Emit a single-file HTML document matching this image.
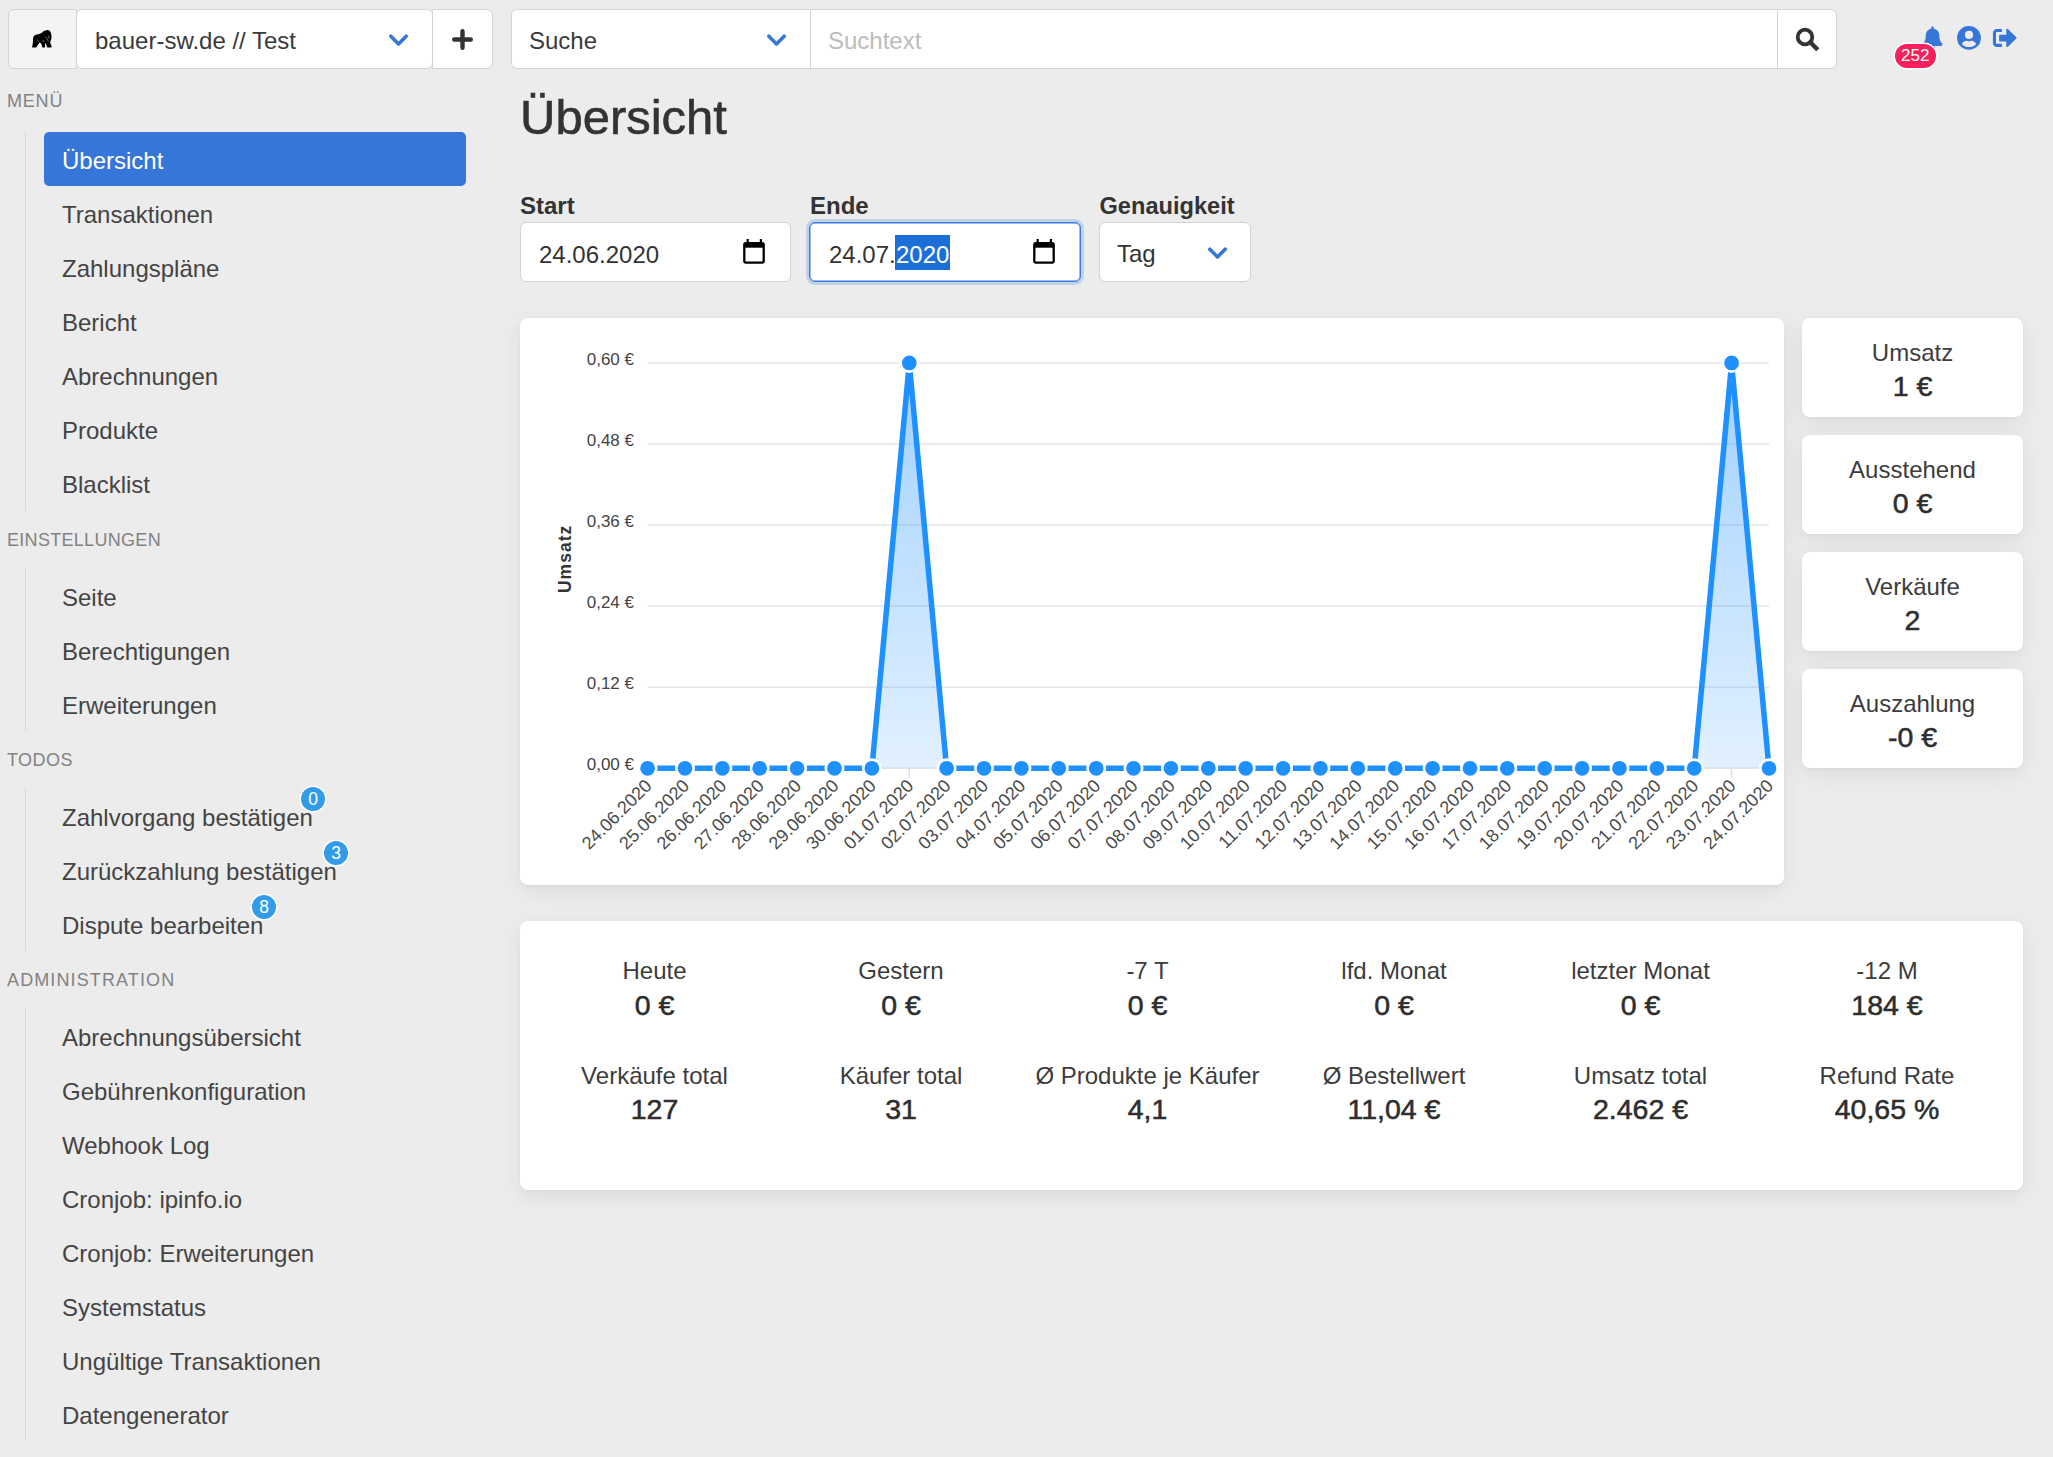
<!DOCTYPE html>
<html lang="de">
<head>
<meta charset="utf-8">
<title>Übersicht</title>
<style>
*{box-sizing:border-box;margin:0;padding:0}
html,body{width:2053px;height:1457px;overflow:hidden}
body{background:#ececec;font-family:"Liberation Sans",sans-serif;color:#333;position:relative}
.abs{position:absolute}
.box{position:absolute;background:#fff;border:1px solid #d3d3d3}
.t{position:absolute;white-space:nowrap;line-height:1}
/* sidebar */
.sec{position:absolute;left:7px;font-size:18px;letter-spacing:0.3px;color:#828282;white-space:nowrap;line-height:1}
.vl{position:absolute;left:25px;width:1px;background:#d6d6d6}
.it{position:absolute;left:44px;width:422px;height:54px;padding-left:18px;font-size:24px;color:#444;white-space:nowrap;line-height:1}
.it span{position:absolute;left:18px;top:0}
.it.act{background:#3676d8;border-radius:5px;color:#fff}
.bdg{position:absolute;width:24px;height:24px;margin:1px 0 0 1px;border-radius:50%;background:#339cea;box-shadow:0 0 0 1.6px #fff;color:#fff;font-size:17.5px;line-height:25px;text-align:center}
.card{position:absolute;background:#fff;border-radius:8px;box-shadow:0 6px 22px rgba(0,0,0,0.075),0 1px 3px rgba(0,0,0,0.04)}
.lab{position:absolute;font-size:24px;color:#3c3c3c;white-space:nowrap;line-height:1;text-align:center}
.val{position:absolute;font-size:28.5px;font-weight:normal;-webkit-text-stroke:0.55px #2e2e2e;color:#2e2e2e;white-space:nowrap;line-height:1;text-align:center}
</style>
</head>
<body>
<!-- top-left group -->
<div class="box" style="left:8px;top:9px;width:69px;height:60px;background:#f4f4f4;border-radius:6px 0 0 6px"></div>
<svg class="abs" style="left:28px;top:26px" width="28" height="26" viewBox="0 0 28 26"><path d="M19.6 4.1C21.4 4.1 22.6 5.6 23 7.6 23.3 9 23.6 10.2 23.5 11.6 23.4 13.4 22.6 15 22.2 16.4L23.6 20.2C23.9 21 23.5 21.6 22.8 21.6H19.3C18.6 19.8 17.9 18 17.2 16.4 16.9 18 17 19.8 17.1 21.6H14.4C14 20 13.6 18.5 13 17.2L11.5 16.6C10.4 18.2 9.2 19.8 8.3 21.6H4.1C4.2 19.6 4.8 17.8 5 15.8 4.8 14.2 4.9 12.4 5.5 10.7 6.2 9.2 7.4 8.6 9 8.4 11 8.1 12.6 7.6 14.3 6.4 16 5 17.6 4.1 19.6 4.1Z" fill="#000"/><path d="M20.7 9.8c.4.8.4 1.6.1 2.5M17.9 11.3l2.6 4M9.3 13.8l1.3 1.6M15.2 14.2l.5 1.5" stroke="#8a8a8a" stroke-width="0.8" fill="none" stroke-linecap="round"/></svg>
<div class="box" style="left:76px;top:9px;width:357px;height:60px;border-radius:6px"></div>
<div class="t" style="left:95px;top:29px;font-size:24px;color:#3a3a3a">bauer-sw.de // Test</div>
<svg class="abs" style="left:387px;top:32px" width="23" height="16" viewBox="0 0 23 16"><path d="M3.8 4.2l7.7 7.7 7.7-7.7" stroke="#3676d8" stroke-width="3.6" fill="none" stroke-linecap="round" stroke-linejoin="round"/></svg>
<div class="box" style="left:432px;top:9px;width:61px;height:60px;border-radius:0 6px 6px 0"></div>
<svg class="abs" style="left:450px;top:26.5px" width="25" height="25" viewBox="0 0 25 25"><path d="M12.5 4.2v16.6M4.2 12.5h16.6" stroke="#333" stroke-width="4.4" stroke-linecap="round"/></svg>

<!-- search group -->
<div class="box" style="left:511px;top:9px;width:1326px;height:60px;border-radius:6px"></div>
<div class="abs" style="left:810px;top:10px;width:1px;height:58px;background:#d3d3d3"></div>
<div class="abs" style="left:1777px;top:10px;width:1px;height:58px;background:#d3d3d3"></div>
<div class="t" style="left:529px;top:29px;font-size:24px;color:#3a3a3a">Suche</div>
<svg class="abs" style="left:765px;top:32px" width="23" height="16" viewBox="0 0 23 16"><path d="M3.8 4.2l7.7 7.7 7.7-7.7" stroke="#3676d8" stroke-width="3.6" fill="none" stroke-linecap="round" stroke-linejoin="round"/></svg>
<div class="t" style="left:828px;top:29px;font-size:24px;color:#bcbcbc">Suchtext</div>
<svg class="abs" style="left:1793px;top:25px" width="28" height="28" viewBox="0 0 28 28"><circle cx="12" cy="12" r="7.3" stroke="#333" stroke-width="3.8" fill="none"/><path d="M17.3 17.3l5.9 5.9" stroke="#333" stroke-width="4.4" stroke-linecap="square"/></svg>

<!-- header icons -->
<svg class="abs" style="left:1920.2px;top:24.6px" width="25" height="25" viewBox="0 0 24 24" preserveAspectRatio="none"><path d="M12 1.5c.8 0 1.3.5 1.3 1.3v.9c3.1.6 5.3 3.3 5.3 6.5v1.3c0 2.1.8 4.1 2.2 5.7l.4.4c.4.5.5 1.1.3 1.6-.3.5-.8.9-1.4.9H4c-.6 0-1.1-.4-1.4-.9-.2-.5-.1-1.1.3-1.6l.4-.4c1.4-1.6 2.2-3.6 2.2-5.7v-1.3c0-3.2 2.2-5.9 5.3-6.5v-.9c0-.8.5-1.3 1.2-1.3zM9.5 20.8h5c0 1.3-1.1 2.4-2.5 2.4s-2.5-1.1-2.5-2.4z" fill="#3676d8"/></svg>
<div class="abs" style="left:1894.5px;top:44px;width:41.5px;height:24px;border-radius:12px;background:#f5205c;box-shadow:0 0 0 1.4px #fff;color:#fff;font-size:17px;line-height:24px;text-align:center">252</div>
<svg class="abs" style="left:1956px;top:25px" width="26" height="26" viewBox="0 0 26 26"><circle cx="13" cy="12.9" r="11.9" fill="#3676d8"/><circle cx="13" cy="9.9" r="4.1" fill="#ececec"/><path d="M5.9 19C6.8 17 8.6 15.9 10.6 15.8 11.5 15.8 12.3 16.3 13 16.6 13.7 16.3 14.5 15.8 15.4 15.8 17.4 15.9 19.2 17 20.1 19 18.9 21.1 16.2 22.1 13 22.1S7.1 21.1 5.9 19Z" fill="#ececec"/></svg>
<svg class="abs" style="left:1992px;top:27px" width="27" height="22" viewBox="0 0 27 22"><path d="M9.9 2H4.9C2.7 2 0.9 3.8 0.9 6V15.9C0.9 18.1 2.7 19.9 4.9 19.9H9.9V16.8H5C4.4 16.8 4 16.4 4 15.8V6.1C4 5.5 4.4 5.1 5 5.1H9.9Z" fill="#3676d8"/><path d="M7.1 8.8C7.1 8.2 7.5 7.8 8.1 7.8H14.3V2.8C14.3 1.9 15.3 1.5 15.9 2.1L24.3 10.2C24.7 10.6 24.7 11.2 24.3 11.6L15.9 19.7C15.3 20.3 14.3 19.9 14.3 19V14.4H8.1C7.5 14.4 7.1 14 7.1 13.4Z" fill="#3676d8"/></svg>

<!-- sidebar -->
<div class="sec" style="top:92px;letter-spacing:0.8px">MENÜ</div>
<div class="vl" style="top:132px;height:379px"></div>
<div class="it act" style="top:132px"><span style="top:17px">Übersicht</span></div>
<div class="it" style="top:186px"><span style="top:17px">Transaktionen</span></div>
<div class="it" style="top:240px"><span style="top:17px">Zahlungspläne</span></div>
<div class="it" style="top:294px"><span style="top:17px">Bericht</span></div>
<div class="it" style="top:348px"><span style="top:17px">Abrechnungen</span></div>
<div class="it" style="top:402px"><span style="top:17px">Produkte</span></div>
<div class="it" style="top:456px"><span style="top:17px">Blacklist</span></div>

<div class="sec" style="top:531px;letter-spacing:0.3px">EINSTELLUNGEN</div>
<div class="vl" style="top:568px;height:163px"></div>
<div class="it" style="top:569px"><span style="top:17px">Seite</span></div>
<div class="it" style="top:623px"><span style="top:17px">Berechtigungen</span></div>
<div class="it" style="top:677px"><span style="top:17px">Erweiterungen</span></div>

<div class="sec" style="top:751px;letter-spacing:0.45px">TODOS</div>
<div class="vl" style="top:788px;height:163px"></div>
<div class="it" style="top:789px"><span style="top:17px">Zahlvorgang bestätigen</span></div>
<div class="it" style="top:843px"><span style="top:17px">Zurückzahlung bestätigen</span></div>
<div class="it" style="top:897px"><span style="top:17px">Dispute bearbeiten</span></div>
<div class="bdg" style="left:300px;top:786px">0</div>
<div class="bdg" style="left:323px;top:840px">3</div>
<div class="bdg" style="left:251px;top:894px">8</div>

<div class="sec" style="top:971px;letter-spacing:1.12px">ADMINISTRATION</div>
<div class="vl" style="top:1008px;height:433px"></div>
<div class="it" style="top:1009px"><span style="top:17px">Abrechnungsübersicht</span></div>
<div class="it" style="top:1063px"><span style="top:17px">Gebührenkonfiguration</span></div>
<div class="it" style="top:1117px"><span style="top:17px">Webhook Log</span></div>
<div class="it" style="top:1171px"><span style="top:17px">Cronjob: ipinfo.io</span></div>
<div class="it" style="top:1225px"><span style="top:17px">Cronjob: Erweiterungen</span></div>
<div class="it" style="top:1279px"><span style="top:17px">Systemstatus</span></div>
<div class="it" style="top:1333px"><span style="top:17px">Ungültige Transaktionen</span></div>
<div class="it" style="top:1387px"><span style="top:17px">Datengenerator</span></div>

<!-- main -->
<div class="t" style="left:520px;top:92.5px;font-size:49px;color:#333;-webkit-text-stroke:0.6px #333">Übersicht</div>
<div class="t" style="left:520px;top:194.2px;font-size:24px;font-weight:bold;color:#333">Start</div>
<div class="t" style="left:810px;top:194.2px;font-size:24px;font-weight:bold;color:#333">Ende</div>
<div class="t" style="left:1099.5px;top:194.6px;font-size:23.6px;font-weight:bold;color:#333">Genauigkeit</div>

<div class="box" style="left:520px;top:222px;width:271px;height:60px;border-radius:6px"></div>
<div class="t" style="left:539px;top:243px;font-size:24px;color:#333">24.06.2020</div>
<svg class="abs" style="left:741px;top:238px" width="26" height="28" viewBox="0 0 26 28"><path d="M6.65 0.9v4.5M19.9 0.9v4.5" stroke="#000" stroke-width="2.2"/><rect x="3.3" y="5.1" width="19.4" height="19.6" rx="1.6" stroke="#000" stroke-width="2.3" fill="none"/><rect x="3.3" y="5.1" width="19.4" height="4.6" fill="#000"/></svg>

<div class="abs" style="left:806px;top:219px;width:278px;height:66px;border-radius:9px;background:#c2d2ea"></div>
<div class="box" style="left:809px;top:222px;width:272px;height:60px;border-radius:6px;border:1px solid #3a78dc;box-shadow:inset 0 0 0 0.5px #3a78dc"></div>
<div class="t" style="left:829px;top:243px;font-size:24px;color:#333">24.07.</div>
<div class="abs" style="left:895px;top:235px;width:55px;height:35px;background:#1d6fd8"></div>
<div class="t" style="left:896px;top:243px;font-size:24px;color:#fff">2020</div>
<svg class="abs" style="left:1031px;top:238px" width="26" height="28" viewBox="0 0 26 28"><path d="M6.65 0.9v4.5M19.9 0.9v4.5" stroke="#000" stroke-width="2.2"/><rect x="3.3" y="5.1" width="19.4" height="19.6" rx="1.6" stroke="#000" stroke-width="2.3" fill="none"/><rect x="3.3" y="5.1" width="19.4" height="4.6" fill="#000"/></svg>

<div class="box" style="left:1099px;top:222px;width:152px;height:60px;border-radius:6px"></div>
<div class="t" style="left:1117px;top:242px;font-size:24px;color:#333">Tag</div>
<svg class="abs" style="left:1206px;top:245.2px" width="23" height="16" viewBox="0 0 23 16"><path d="M3.8 4.2l7.7 7.7 7.7-7.7" stroke="#3676d8" stroke-width="3.6" fill="none" stroke-linecap="round" stroke-linejoin="round"/></svg>

<div class="card" style="left:520px;top:318px;width:1264px;height:567px"></div>

<div class="card" style="left:1802px;top:318px;width:221px;height:99px"></div>
<div class="card" style="left:1802px;top:435px;width:221px;height:99px"></div>
<div class="card" style="left:1802px;top:552px;width:221px;height:99px"></div>
<div class="card" style="left:1802px;top:669px;width:221px;height:99px"></div>

<div class="card" style="left:520px;top:921px;width:1503px;height:269px"></div>

<div class="lab" style="left:1802px;width:221px;top:341px">Umsatz</div>
<div class="val" style="left:1802px;width:221px;top:372.3px">1 €</div>
<div class="lab" style="left:1802px;width:221px;top:458px">Ausstehend</div>
<div class="val" style="left:1802px;width:221px;top:489.3px">0 €</div>
<div class="lab" style="left:1802px;width:221px;top:575px">Verkäufe</div>
<div class="val" style="left:1802px;width:221px;top:606.3px">2</div>
<div class="lab" style="left:1802px;width:221px;top:692px">Auszahlung</div>
<div class="val" style="left:1802px;width:221px;top:723.3px">-0 €</div>
<div class="lab" style="left:504.5px;width:300px;top:958.5px">Heute</div>
<div class="val" style="left:504.5px;width:300px;top:990.5px">0 €</div>
<div class="lab" style="left:751.0px;width:300px;top:958.5px">Gestern</div>
<div class="val" style="left:751.0px;width:300px;top:990.5px">0 €</div>
<div class="lab" style="left:997.5px;width:300px;top:958.5px">-7 T</div>
<div class="val" style="left:997.5px;width:300px;top:990.5px">0 €</div>
<div class="lab" style="left:1244.0px;width:300px;top:958.5px">lfd. Monat</div>
<div class="val" style="left:1244.0px;width:300px;top:990.5px">0 €</div>
<div class="lab" style="left:1490.5px;width:300px;top:958.5px">letzter Monat</div>
<div class="val" style="left:1490.5px;width:300px;top:990.5px">0 €</div>
<div class="lab" style="left:1737.0px;width:300px;top:958.5px">-12 M</div>
<div class="val" style="left:1737.0px;width:300px;top:990.5px">184 €</div>
<div class="lab" style="left:504.5px;width:300px;top:1064.3px">Verkäufe total</div>
<div class="val" style="left:504.5px;width:300px;top:1095.1px">127</div>
<div class="lab" style="left:751.0px;width:300px;top:1064.3px">Käufer total</div>
<div class="val" style="left:751.0px;width:300px;top:1095.1px">31</div>
<div class="lab" style="left:997.5px;width:300px;top:1064.3px">Ø Produkte je Käufer</div>
<div class="val" style="left:997.5px;width:300px;top:1095.1px">4,1</div>
<div class="lab" style="left:1244.0px;width:300px;top:1064.3px">Ø Bestellwert</div>
<div class="val" style="left:1244.0px;width:300px;top:1095.1px">11,04 €</div>
<div class="lab" style="left:1490.5px;width:300px;top:1064.3px">Umsatz total</div>
<div class="val" style="left:1490.5px;width:300px;top:1095.1px">2.462 €</div>
<div class="lab" style="left:1737.0px;width:300px;top:1064.3px">Refund Rate</div>
<div class="val" style="left:1737.0px;width:300px;top:1095.1px">40,65 %</div>
<!--STATS-->
<svg id="chart" width="2053" height="1457" viewBox="0 0 2053 1457" style="position:absolute;left:0;top:0;pointer-events:none">
<defs><linearGradient id="fg" x1="0" y1="0" x2="0" y2="1"><stop offset="0" stop-color="#1e90ff" stop-opacity="0.42"/><stop offset="1" stop-color="#1e90ff" stop-opacity="0.13"/></linearGradient></defs>
<line x1="647.6" y1="362.9" x2="1769.0" y2="362.9" stroke="#e6e6e6" stroke-width="1.5"/>
<line x1="647.6" y1="444.0" x2="1769.0" y2="444.0" stroke="#e6e6e6" stroke-width="1.5"/>
<line x1="647.6" y1="525.1" x2="1769.0" y2="525.1" stroke="#e6e6e6" stroke-width="1.5"/>
<line x1="647.6" y1="606.1" x2="1769.0" y2="606.1" stroke="#e6e6e6" stroke-width="1.5"/>
<line x1="647.6" y1="687.2" x2="1769.0" y2="687.2" stroke="#e6e6e6" stroke-width="1.5"/>
<line x1="647.6" y1="768.3" x2="1769.0" y2="768.3" stroke="#e6e6e6" stroke-width="1.5"/>
<line x1="647.6" y1="768.3" x2="647.6" y2="778.3" stroke="#e0e0e0" stroke-width="1.5"/>
<line x1="685.0" y1="768.3" x2="685.0" y2="778.3" stroke="#e0e0e0" stroke-width="1.5"/>
<line x1="722.4" y1="768.3" x2="722.4" y2="778.3" stroke="#e0e0e0" stroke-width="1.5"/>
<line x1="759.7" y1="768.3" x2="759.7" y2="778.3" stroke="#e0e0e0" stroke-width="1.5"/>
<line x1="797.1" y1="768.3" x2="797.1" y2="778.3" stroke="#e0e0e0" stroke-width="1.5"/>
<line x1="834.5" y1="768.3" x2="834.5" y2="778.3" stroke="#e0e0e0" stroke-width="1.5"/>
<line x1="871.9" y1="768.3" x2="871.9" y2="778.3" stroke="#e0e0e0" stroke-width="1.5"/>
<line x1="909.3" y1="768.3" x2="909.3" y2="778.3" stroke="#e0e0e0" stroke-width="1.5"/>
<line x1="946.6" y1="768.3" x2="946.6" y2="778.3" stroke="#e0e0e0" stroke-width="1.5"/>
<line x1="984.0" y1="768.3" x2="984.0" y2="778.3" stroke="#e0e0e0" stroke-width="1.5"/>
<line x1="1021.4" y1="768.3" x2="1021.4" y2="778.3" stroke="#e0e0e0" stroke-width="1.5"/>
<line x1="1058.8" y1="768.3" x2="1058.8" y2="778.3" stroke="#e0e0e0" stroke-width="1.5"/>
<line x1="1096.2" y1="768.3" x2="1096.2" y2="778.3" stroke="#e0e0e0" stroke-width="1.5"/>
<line x1="1133.5" y1="768.3" x2="1133.5" y2="778.3" stroke="#e0e0e0" stroke-width="1.5"/>
<line x1="1170.9" y1="768.3" x2="1170.9" y2="778.3" stroke="#e0e0e0" stroke-width="1.5"/>
<line x1="1208.3" y1="768.3" x2="1208.3" y2="778.3" stroke="#e0e0e0" stroke-width="1.5"/>
<line x1="1245.7" y1="768.3" x2="1245.7" y2="778.3" stroke="#e0e0e0" stroke-width="1.5"/>
<line x1="1283.1" y1="768.3" x2="1283.1" y2="778.3" stroke="#e0e0e0" stroke-width="1.5"/>
<line x1="1320.4" y1="768.3" x2="1320.4" y2="778.3" stroke="#e0e0e0" stroke-width="1.5"/>
<line x1="1357.8" y1="768.3" x2="1357.8" y2="778.3" stroke="#e0e0e0" stroke-width="1.5"/>
<line x1="1395.2" y1="768.3" x2="1395.2" y2="778.3" stroke="#e0e0e0" stroke-width="1.5"/>
<line x1="1432.6" y1="768.3" x2="1432.6" y2="778.3" stroke="#e0e0e0" stroke-width="1.5"/>
<line x1="1470.0" y1="768.3" x2="1470.0" y2="778.3" stroke="#e0e0e0" stroke-width="1.5"/>
<line x1="1507.3" y1="768.3" x2="1507.3" y2="778.3" stroke="#e0e0e0" stroke-width="1.5"/>
<line x1="1544.7" y1="768.3" x2="1544.7" y2="778.3" stroke="#e0e0e0" stroke-width="1.5"/>
<line x1="1582.1" y1="768.3" x2="1582.1" y2="778.3" stroke="#e0e0e0" stroke-width="1.5"/>
<line x1="1619.5" y1="768.3" x2="1619.5" y2="778.3" stroke="#e0e0e0" stroke-width="1.5"/>
<line x1="1656.9" y1="768.3" x2="1656.9" y2="778.3" stroke="#e0e0e0" stroke-width="1.5"/>
<line x1="1694.2" y1="768.3" x2="1694.2" y2="778.3" stroke="#e0e0e0" stroke-width="1.5"/>
<line x1="1731.6" y1="768.3" x2="1731.6" y2="778.3" stroke="#e0e0e0" stroke-width="1.5"/>
<line x1="1769.0" y1="768.3" x2="1769.0" y2="778.3" stroke="#e0e0e0" stroke-width="1.5"/>
<text x="634" y="364.9" text-anchor="end" font-size="17" fill="#444">0,60 €</text>
<text x="634" y="446.0" text-anchor="end" font-size="17" fill="#444">0,48 €</text>
<text x="634" y="527.1" text-anchor="end" font-size="17" fill="#444">0,36 €</text>
<text x="634" y="608.1" text-anchor="end" font-size="17" fill="#444">0,24 €</text>
<text x="634" y="689.2" text-anchor="end" font-size="17" fill="#444">0,12 €</text>
<text x="634" y="770.3" text-anchor="end" font-size="17" fill="#444">0,00 €</text>
<text transform="translate(571.2,558.9) rotate(-90)" text-anchor="middle" font-size="17.5" letter-spacing="1" font-weight="bold" fill="#333">Umsatz</text>
<path d="M647.6,768.3 L647.6,768.3 L685.0,768.3 L722.4,768.3 L759.7,768.3 L797.1,768.3 L834.5,768.3 L871.9,768.3 L909.3,362.9 L946.6,768.3 L984.0,768.3 L1021.4,768.3 L1058.8,768.3 L1096.2,768.3 L1133.5,768.3 L1170.9,768.3 L1208.3,768.3 L1245.7,768.3 L1283.1,768.3 L1320.4,768.3 L1357.8,768.3 L1395.2,768.3 L1432.6,768.3 L1470.0,768.3 L1507.3,768.3 L1544.7,768.3 L1582.1,768.3 L1619.5,768.3 L1656.9,768.3 L1694.2,768.3 L1731.6,362.9 L1769.0,768.3 L1769.0,768.3 Z" fill="url(#fg)" stroke="none"/>
<path d="M647.6,768.3 L685.0,768.3 L722.4,768.3 L759.7,768.3 L797.1,768.3 L834.5,768.3 L871.9,768.3 L909.3,362.9 L946.6,768.3 L984.0,768.3 L1021.4,768.3 L1058.8,768.3 L1096.2,768.3 L1133.5,768.3 L1170.9,768.3 L1208.3,768.3 L1245.7,768.3 L1283.1,768.3 L1320.4,768.3 L1357.8,768.3 L1395.2,768.3 L1432.6,768.3 L1470.0,768.3 L1507.3,768.3 L1544.7,768.3 L1582.1,768.3 L1619.5,768.3 L1656.9,768.3 L1694.2,768.3 L1731.6,362.9 L1769.0,768.3" fill="none" stroke="#1e90ff" stroke-width="5.5" stroke-linejoin="miter" stroke-miterlimit="10"/>
<circle cx="647.6" cy="768.3" r="8.7" fill="#1e90ff" stroke="#fff" stroke-width="2.6"/>
<circle cx="685.0" cy="768.3" r="8.7" fill="#1e90ff" stroke="#fff" stroke-width="2.6"/>
<circle cx="722.4" cy="768.3" r="8.7" fill="#1e90ff" stroke="#fff" stroke-width="2.6"/>
<circle cx="759.7" cy="768.3" r="8.7" fill="#1e90ff" stroke="#fff" stroke-width="2.6"/>
<circle cx="797.1" cy="768.3" r="8.7" fill="#1e90ff" stroke="#fff" stroke-width="2.6"/>
<circle cx="834.5" cy="768.3" r="8.7" fill="#1e90ff" stroke="#fff" stroke-width="2.6"/>
<circle cx="871.9" cy="768.3" r="8.7" fill="#1e90ff" stroke="#fff" stroke-width="2.6"/>
<circle cx="909.3" cy="362.9" r="8.7" fill="#1e90ff" stroke="#fff" stroke-width="2.6"/>
<circle cx="946.6" cy="768.3" r="8.7" fill="#1e90ff" stroke="#fff" stroke-width="2.6"/>
<circle cx="984.0" cy="768.3" r="8.7" fill="#1e90ff" stroke="#fff" stroke-width="2.6"/>
<circle cx="1021.4" cy="768.3" r="8.7" fill="#1e90ff" stroke="#fff" stroke-width="2.6"/>
<circle cx="1058.8" cy="768.3" r="8.7" fill="#1e90ff" stroke="#fff" stroke-width="2.6"/>
<circle cx="1096.2" cy="768.3" r="8.7" fill="#1e90ff" stroke="#fff" stroke-width="2.6"/>
<circle cx="1133.5" cy="768.3" r="8.7" fill="#1e90ff" stroke="#fff" stroke-width="2.6"/>
<circle cx="1170.9" cy="768.3" r="8.7" fill="#1e90ff" stroke="#fff" stroke-width="2.6"/>
<circle cx="1208.3" cy="768.3" r="8.7" fill="#1e90ff" stroke="#fff" stroke-width="2.6"/>
<circle cx="1245.7" cy="768.3" r="8.7" fill="#1e90ff" stroke="#fff" stroke-width="2.6"/>
<circle cx="1283.1" cy="768.3" r="8.7" fill="#1e90ff" stroke="#fff" stroke-width="2.6"/>
<circle cx="1320.4" cy="768.3" r="8.7" fill="#1e90ff" stroke="#fff" stroke-width="2.6"/>
<circle cx="1357.8" cy="768.3" r="8.7" fill="#1e90ff" stroke="#fff" stroke-width="2.6"/>
<circle cx="1395.2" cy="768.3" r="8.7" fill="#1e90ff" stroke="#fff" stroke-width="2.6"/>
<circle cx="1432.6" cy="768.3" r="8.7" fill="#1e90ff" stroke="#fff" stroke-width="2.6"/>
<circle cx="1470.0" cy="768.3" r="8.7" fill="#1e90ff" stroke="#fff" stroke-width="2.6"/>
<circle cx="1507.3" cy="768.3" r="8.7" fill="#1e90ff" stroke="#fff" stroke-width="2.6"/>
<circle cx="1544.7" cy="768.3" r="8.7" fill="#1e90ff" stroke="#fff" stroke-width="2.6"/>
<circle cx="1582.1" cy="768.3" r="8.7" fill="#1e90ff" stroke="#fff" stroke-width="2.6"/>
<circle cx="1619.5" cy="768.3" r="8.7" fill="#1e90ff" stroke="#fff" stroke-width="2.6"/>
<circle cx="1656.9" cy="768.3" r="8.7" fill="#1e90ff" stroke="#fff" stroke-width="2.6"/>
<circle cx="1694.2" cy="768.3" r="8.7" fill="#1e90ff" stroke="#fff" stroke-width="2.6"/>
<circle cx="1731.6" cy="362.9" r="8.7" fill="#1e90ff" stroke="#fff" stroke-width="2.6"/>
<circle cx="1769.0" cy="768.3" r="8.7" fill="#1e90ff" stroke="#fff" stroke-width="2.6"/>
<text transform="translate(652.9,786.8) rotate(-45)" text-anchor="end" font-size="18" fill="#4a4a4a">24.06.2020</text>
<text transform="translate(690.3,786.8) rotate(-45)" text-anchor="end" font-size="18" fill="#4a4a4a">25.06.2020</text>
<text transform="translate(727.7,786.8) rotate(-45)" text-anchor="end" font-size="18" fill="#4a4a4a">26.06.2020</text>
<text transform="translate(765.0,786.8) rotate(-45)" text-anchor="end" font-size="18" fill="#4a4a4a">27.06.2020</text>
<text transform="translate(802.4,786.8) rotate(-45)" text-anchor="end" font-size="18" fill="#4a4a4a">28.06.2020</text>
<text transform="translate(839.8,786.8) rotate(-45)" text-anchor="end" font-size="18" fill="#4a4a4a">29.06.2020</text>
<text transform="translate(877.2,786.8) rotate(-45)" text-anchor="end" font-size="18" fill="#4a4a4a">30.06.2020</text>
<text transform="translate(914.6,786.8) rotate(-45)" text-anchor="end" font-size="18" fill="#4a4a4a">01.07.2020</text>
<text transform="translate(951.9,786.8) rotate(-45)" text-anchor="end" font-size="18" fill="#4a4a4a">02.07.2020</text>
<text transform="translate(989.3,786.8) rotate(-45)" text-anchor="end" font-size="18" fill="#4a4a4a">03.07.2020</text>
<text transform="translate(1026.7,786.8) rotate(-45)" text-anchor="end" font-size="18" fill="#4a4a4a">04.07.2020</text>
<text transform="translate(1064.1,786.8) rotate(-45)" text-anchor="end" font-size="18" fill="#4a4a4a">05.07.2020</text>
<text transform="translate(1101.5,786.8) rotate(-45)" text-anchor="end" font-size="18" fill="#4a4a4a">06.07.2020</text>
<text transform="translate(1138.8,786.8) rotate(-45)" text-anchor="end" font-size="18" fill="#4a4a4a">07.07.2020</text>
<text transform="translate(1176.2,786.8) rotate(-45)" text-anchor="end" font-size="18" fill="#4a4a4a">08.07.2020</text>
<text transform="translate(1213.6,786.8) rotate(-45)" text-anchor="end" font-size="18" fill="#4a4a4a">09.07.2020</text>
<text transform="translate(1251.0,786.8) rotate(-45)" text-anchor="end" font-size="18" fill="#4a4a4a">10.07.2020</text>
<text transform="translate(1288.4,786.8) rotate(-45)" text-anchor="end" font-size="18" fill="#4a4a4a">11.07.2020</text>
<text transform="translate(1325.7,786.8) rotate(-45)" text-anchor="end" font-size="18" fill="#4a4a4a">12.07.2020</text>
<text transform="translate(1363.1,786.8) rotate(-45)" text-anchor="end" font-size="18" fill="#4a4a4a">13.07.2020</text>
<text transform="translate(1400.5,786.8) rotate(-45)" text-anchor="end" font-size="18" fill="#4a4a4a">14.07.2020</text>
<text transform="translate(1437.9,786.8) rotate(-45)" text-anchor="end" font-size="18" fill="#4a4a4a">15.07.2020</text>
<text transform="translate(1475.3,786.8) rotate(-45)" text-anchor="end" font-size="18" fill="#4a4a4a">16.07.2020</text>
<text transform="translate(1512.6,786.8) rotate(-45)" text-anchor="end" font-size="18" fill="#4a4a4a">17.07.2020</text>
<text transform="translate(1550.0,786.8) rotate(-45)" text-anchor="end" font-size="18" fill="#4a4a4a">18.07.2020</text>
<text transform="translate(1587.4,786.8) rotate(-45)" text-anchor="end" font-size="18" fill="#4a4a4a">19.07.2020</text>
<text transform="translate(1624.8,786.8) rotate(-45)" text-anchor="end" font-size="18" fill="#4a4a4a">20.07.2020</text>
<text transform="translate(1662.2,786.8) rotate(-45)" text-anchor="end" font-size="18" fill="#4a4a4a">21.07.2020</text>
<text transform="translate(1699.5,786.8) rotate(-45)" text-anchor="end" font-size="18" fill="#4a4a4a">22.07.2020</text>
<text transform="translate(1736.9,786.8) rotate(-45)" text-anchor="end" font-size="18" fill="#4a4a4a">23.07.2020</text>
<text transform="translate(1774.3,786.8) rotate(-45)" text-anchor="end" font-size="18" fill="#4a4a4a">24.07.2020</text>
</svg>
</body>
</html>
